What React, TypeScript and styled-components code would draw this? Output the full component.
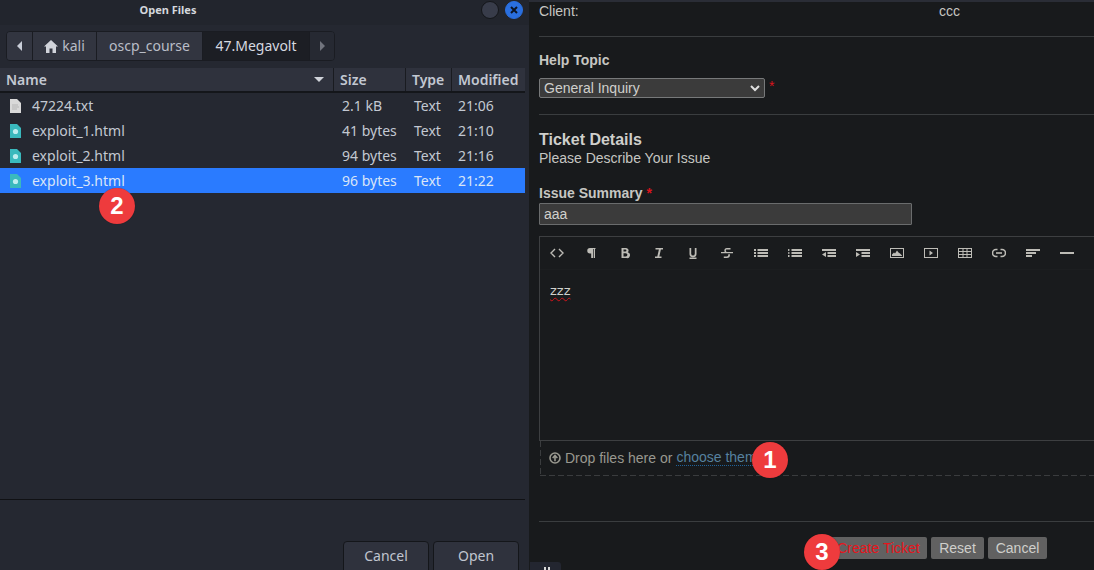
import React from "react";
import styled, { createGlobalStyle } from "styled-components";

const Global = createGlobalStyle`
  html, body { margin: 0; padding: 0; width: 1094px; height: 570px; overflow: hidden; background: #181a1c; }
  #root { width: 1094px; height: 570px; }
`;

const Page = styled.div`
  position: relative;
  display: flex;
  width: 1094px;
  height: 570px;
  overflow: hidden;
  background: #181a1c;
`;

/* ---------- file dialog ---------- */
const Dialog = styled.div`
  width: 529px;
  height: 570px;
  flex: none;
  display: flex;
  flex-direction: column;
  background: #252831;
  font-family: "Noto Sans", sans-serif;
  font-size: 14px;
  color: #c9ced8;
`;
const TitleBar = styled.div`
  height: 25px;
  flex: none;
  display: flex;
  align-items: center;
  background: #22252d;
  position: relative;
`;
const Title = styled.div`
  width: 336px;
  text-align: center;
  font-size: 11px;
  font-weight: 700;
  color: #d4d7dd;
  line-height: 20px;
  margin-top: -5px;
`;
const WinButtons = styled.div`
  position: absolute;
  left: 481px;
  top: 1px;
  display: flex;
  gap: 6px;
`;
const WinDot = styled.div<{ $blue?: boolean }>`
  width: 18px;
  height: 18px;
  box-sizing: border-box;
  border-radius: 50%;
  background: ${(p) => (p.$blue ? "#2a6fdf" : "#383c4a")};
  border: 1px solid ${(p) => (p.$blue ? "#2a6fdf" : "#14161a")};
  display: flex;
  align-items: center;
  justify-content: center;
`;
const PathArea = styled.div`
  height: 43px;
  flex: none;
  box-sizing: border-box;
  padding: 6px 0 0 6px;
  background: #252831;
`;
const PathBar = styled.div`
  width: 329px;
  height: 30px;
  box-sizing: border-box;
  border: 1px solid #1a1c22;
  border-radius: 4px;
  display: flex;
  background: #2a2d38;
  overflow: hidden;
`;
const Crumb = styled.div<{ $w: number; $active?: boolean; $dim?: boolean }>`
  width: ${(p) => p.$w}px;
  flex: none;
  box-sizing: border-box;
  display: flex;
  align-items: center;
  justify-content: center;
  gap: 4px;
  background: ${(p) => (p.$active ? "#1c1e24" : p.$dim ? "#262932" : "#323540")};
  border-right: 1px solid #1a1c22;
  color: ${(p) => (p.$active ? "#d6d9e0" : "#b9bdc7")};
  font-size: 14px;
  line-height: 28px;
  &:last-child { border-right: none; }
`;
const Columns = styled.div`
  height: 25px;
  flex: none;
  box-sizing: border-box;
  display: flex;
  width: 525px;
  background: #2f323d;
  border-bottom: 2px solid #14161a;
  font-weight: 600;
  font-size: 14px;
  color: #c3c8d2;
`;
const Column = styled.div<{ $w: number }>`
  width: ${(p) => p.$w}px;
  flex: none;
  box-sizing: border-box;
  padding-left: 6px;
  display: flex;
  align-items: center;
  justify-content: space-between;
  border-right: 1px solid #191b20;
  line-height: 22px;
  &:last-child { border-right: none; }
`;
const SortArrow = styled.svg`
  margin-right: 9px;
`;
const List = styled.div`
  flex: 1;
  width: 525px;
  background: #252831;
  border-bottom: 1px solid #101114;
`;
const Row = styled.div<{ $sel?: boolean }>`
  height: 25px;
  display: flex;
  align-items: center;
  background: ${(p) => (p.$sel ? "#2a7bff" : "transparent")};
  color: ${(p) => (p.$sel ? "#d9e5f8" : "#c3c8d2")};
`;
const NameCell = styled.div`
  width: 342px;
  flex: none;
  display: flex;
  align-items: center;
  gap: 11px;
  padding-left: 10px;
  box-sizing: border-box;
`;
const SizeCell = styled.div`
  width: 72px;
  flex: none;
`;
const TypeCell = styled.div`
  width: 44px;
  flex: none;
`;
const Footer = styled.div`
  height: 70px;
  flex: none;
  box-sizing: border-box;
  padding: 41px 10px 0 0;
  display: flex;
  justify-content: flex-end;
  gap: 4px;
`;
const DlgButton = styled.div`
  width: 86px;
  height: 40px;
  box-sizing: border-box;
  border: 1px solid #14161a;
  border-radius: 4px;
  background: #2f323d;
  color: #c0c5cf;
  text-align: center;
  line-height: 27px;
  font-size: 14px;
`;

/* ---------- ticket form ---------- */
const Main = styled.div`
  flex: 1;
  min-width: 0;
  box-sizing: border-box;
  padding-left: 10px;
  border-top: 2px solid #2a2d36;
  font-family: "Liberation Sans", Arial, sans-serif;
  font-size: 14px;
  color: #c6c6c2;
  position: relative;
`;
const ClientRow = styled.div`
  height: 35px;
  box-sizing: border-box;
  display: flex;
  line-height: 18px;
  border-bottom: 1px solid #3a3d3f;
`;
const ClientLabel = styled.div`
  width: 400px;
`;
const Section = styled.div<{ $h: number }>`
  height: ${(p) => p.$h}px;
  box-sizing: border-box;
  border-bottom: 1px solid #3a3d3f;
  padding-top: 14px;
`;
const Strong = styled.div`
  font-weight: 700;
  line-height: 18px;
`;
const SelectRow = styled.div`
  display: flex;
  align-items: flex-start;
  margin-top: 9px;
  gap: 4px;
`;
const FakeSelect = styled.div`
  width: 226px;
  height: 20px;
  box-sizing: border-box;
  border: 1px solid #77797a;
  border-radius: 2px;
  background: #3b3b3b;
  display: flex;
  align-items: center;
  justify-content: space-between;
  padding: 0 4px;
  color: #d0d0cc;
  line-height: 18px;
`;
const Req = styled.span`
  color: #d8141c;
`;
const H3 = styled.div`
  font-weight: 700;
  font-size: 16px;
  line-height: 18px;
  margin-top: 16px;
  color: #cfcfcb;
`;
const Desc = styled.div`
  line-height: 18px;
`;
const IssueLabel = styled.div`
  font-weight: 700;
  line-height: 18px;
  margin-top: 17px;
`;
const SummaryInput = styled.div`
  width: 373px;
  height: 22px;
  box-sizing: border-box;
  border: 1px solid #6a6c6d;
  border-radius: 1px;
  background: #3b3b3b;
  padding-left: 4px;
  line-height: 20px;
  color: #d0d0cc;
  margin-top: 1px;
`;
const Editor = styled.div`
  margin-top: 11px;
  height: 205px;
  box-sizing: border-box;
  border-top: 1px solid #3d3f41;
  border-left: 1px solid #3d3f41;
  border-bottom: 1px solid #3d3f41;
  background: #191b1d;
`;
const Toolbar = styled.div`
  height: 32px;
  display: flex;
  align-items: center;
  padding-left: 10px;
  gap: 20px;
  color: #bdbcb6;
  border-bottom: 1px solid #1c1e20;
`;
const ToolIcon = styled.svg`
  width: 14px;
  height: 14px;
  flex: none;
  fill: currentColor;
`;
const EditorText = styled.div`
  padding: 13px 0 0 10px;
  font-family: "DejaVu Sans", sans-serif;
  font-size: 13px;
  line-height: 16px;
  color: #d0d0cc;
  span { text-decoration: underline wavy #d0141a 1px; text-underline-offset: 2px; }
`;
const DropZone = styled.div`
  margin-left: 1px;
  height: 35px;
  box-sizing: border-box;
  background-image:
    repeating-linear-gradient(to right, #3a3c3e 0 6px, transparent 6px 9px),
    repeating-linear-gradient(to bottom, #3a3c3e 0 6px, transparent 6px 9px);
  background-size: 100% 1px, 1px 100%;
  background-position: left bottom, left top;
  background-repeat: no-repeat;
  padding: 0 0 1px 9px;
  display: flex;
  align-items: center;
  gap: 4px;
  color: #99988f;
`;
const ChooseLink = styled.span`
  color: #56819f;
  border-bottom: 1px dotted #1f6299;
  line-height: 15px;
`;
const FormLine = styled.div`
  height: 1px;
  background: #3a3d3f;
  margin-top: 45px;
`;
const Actions = styled.div`
  display: flex;
  gap: 4px;
  padding: 15px 0 0 291px;
`;
const ActBtn = styled.div<{ $w: number; $red?: boolean }>`
  width: ${(p) => p.$w}px;
  height: 22px;
  box-sizing: border-box;
  border-radius: 2px;
  background: #616161;
  color: ${(p) => (p.$red ? "#e8141c" : "#cfcfcb")};
  text-align: center;
  line-height: 22px;
`;
const Tab = styled.div`
  position: absolute;
  left: 1px;
  top: 560px;
  width: 31px;
  height: 8px;
  box-sizing: border-box;
  padding-left: 3px;
  background: #232630;
  border-radius: 0 3px 0 0;
  display: flex;
  justify-content: center;
  align-items: flex-end;
  gap: 2px;
`;
const TabMark = styled.div`
  width: 2px;
  height: 3px;
  background: #d8d8d8;
`;
const Badge = styled.div<{ $x: number; $y: number }>`
  position: absolute;
  left: ${(p) => p.$x}px;
  top: ${(p) => p.$y}px;
  width: 36px;
  height: 36px;
  border-radius: 50%;
  background: #ee3b3d;
  color: #fff;
  font-family: "Liberation Sans", Arial, sans-serif;
  font-weight: 700;
  font-size: 24px;
  line-height: 36px;
  text-align: center;
  box-shadow: 0 0 1px rgba(0,0,0,.4);
`;

/* ---------- icons ---------- */
const FileIcon = ({ html }: { html?: boolean }) =>
  html ? (
    <svg width="11" height="14" viewBox="0 0 11 14">
      <path d="M0 0h7l4 4v10H0z" fill="#3ab9bd" />
      <circle cx="5.5" cy="7.5" r="2.6" fill="#bfeef0" />
    </svg>
  ) : (
    <svg width="11" height="14" viewBox="0 0 11 14">
      <path d="M0 0h7l4 4v10H0z" fill="#d9d9d9" />
      <path d="M2 6h6M2 8h7M2 10h5" stroke="#b5b5b5" strokeWidth="1" />
    </svg>
  );

const strokeProps = { fill: "none", stroke: "currentColor" };

const tools: React.ReactNode[] = [
  <path key="a" {...strokeProps} strokeWidth="1.4" d="M5 3L1 7l4 4M9 3l4 4-4 4" />,
  <path key="b" d="M6 2h5.500v1H11v9H9.700V3H9v9H7.200V7.500H6a2.750 2.750 0 0 1 0-5.500z" />,
  <path key="c" fillRule="evenodd" d="M3.500 2h4.500a2.500 2.500 0 0 1 1.800 4.300A2.700 2.700 0 0 1 8.300 12H3.500zM5.500 3.600v2h1.900a1 1 0 0 0 0-2zM5.500 7.200v3.200h2.300a1.600 1.600 0 0 0 0-3.200z" />,
  <path key="d" d="M3.500 2h7.500v1.500H8.900L7.300 10.500h2.200V12H3v-1.500h2.300L6.900 3.500H3.500z" />,
  <path key="e" d="M3.500 2h1.700v5.800a1.800 1.800 0 0 0 3.600 0V2h1.700v5.800a3.500 3.500 0 0 1-7 0zM3.500 11.500h7V13h-7z" />,
  <path key="f" d="M10.500 2v1.600H6.800c-1.300 0-1.300 2 0 2.400H13v1.200H1V6h3.700C3.800 4 4.800 2 6.800 2zM8.200 8.200h1.700c.4 2.100-.7 3.800-3 3.800H3.800v-1.500h3.100c1 0 1.600-1.200 1.300-2.300z" />,
  <path key="g" d="M0 3h2v2H0zM0 6h2v2H0zM0 9h2v2H0zM3.500 3H14v2H3.500zM3.500 6H14v2H3.500zM3.500 9H14v2H3.500z" />,
  <path key="h" d="M0 3h1.500v.7H.7v.6h.8V5H0zM0 6.200h1.500v1.600H0zM0 9h1.500v2H0zM3.500 3H14v2H3.500zM3.500 6H14v2H3.500zM3.500 9H14v2H3.500z" />,
  <path key="i" d="M0 3h14v2H0zM5.500 6H14v2H5.500zM5.500 9H14v2H5.500zM0 8.500L4 6v5z" />,
  <path key="j" d="M0 3h14v2H0zM5.500 6H14v2H5.500zM5.500 9H14v2H5.500zM4 8.500L0 6v5z" />,
  <path key="k" fillRule="evenodd" d="M0 2h14v10H0zM1 3v8h12V3zM2 10V8.500l2-2 1 1L7 4.500l1.500 2 1.500 1 2 2V10z" />,
  <path key="l" fillRule="evenodd" d="M0 2h14v10H0zM1 3v8h12V3zM5.500 4.500l3.500 2.500-3.500 2.500z" />,
  <path key="m" fillRule="evenodd" d="M0 2h14v10H0zM1 3v2h3.500V3zM5.500 3v2h3V3zM9.500 3v2H13V3zM1 6v2h3.500V6zM5.500 6v2h3V6zM9.500 6v2H13V6zM1 9v2h3.500V9zM5.500 9v2h3V9zM9.500 9v2H13V9z" />,
  <g key="n" {...strokeProps} strokeWidth="1.600">
    <path d="M5.500 3.500H4a3.500 3.500 0 0 0 0 7h1.500M8.500 3.500H10a3.500 3.500 0 0 1 0 7H8.500" />
    <path d="M4 7h6" />
  </g>,
  <path key="o" d="M0 3h14v2H0zM0 6h10v2H0zM0 9h6v2H0z" />,
  <path key="p" d="M0 6h14v2H0z" />,
];

const files = [
  { n: "47224.txt", s: "2.1 kB", m: "21:06" },
  { n: "exploit_1.html", s: "41 bytes", m: "21:10", h: true },
  { n: "exploit_2.html", s: "94 bytes", m: "21:16", h: true },
  { n: "exploit_3.html", s: "96 bytes", m: "21:22", h: true, sel: true },
];

export default function App() {
  return (
    <Page>
      <Global />
      <Dialog>
        <TitleBar>
          <Title>Open Files</Title>
          <WinButtons>
            <WinDot />
            <WinDot $blue>
              <svg width="8" height="8" viewBox="0 0 8 8">
                <path d="M1 1l6 6M7 1L1 7" stroke="#0c1424" strokeWidth="2" />
              </svg>
            </WinDot>
          </WinButtons>
        </TitleBar>
        <PathArea>
          <PathBar>
            <Crumb $w={26}>
              <svg width="6" height="10" viewBox="0 0 6 10"><path d="M5 0v10L0 5z" fill="#c9ced8" /></svg>
            </Crumb>
            <Crumb $w={64}>
              <svg width="14" height="13" viewBox="0 0 14 13">
                <path d="M7 0L0 6.500h2V13h3.500V8.500h3V13H12V6.500h2z" fill="#d0d3da" />
              </svg>
              kali
            </Crumb>
            <Crumb $w={106}>oscp_course</Crumb>
            <Crumb $w={107} $active>47.Megavolt</Crumb>
            <Crumb $w={24} $dim>
              <svg width="6" height="10" viewBox="0 0 6 10"><path d="M1 0v10l5-5z" fill="#71747d" /></svg>
            </Crumb>
          </PathBar>
        </PathArea>
        <Columns>
          <Column $w={334}>
            Name
            <SortArrow width="10" height="6" viewBox="0 0 10 6"><path d="M0 0h10L5 5z" fill="#d0d3da" /></SortArrow>
          </Column>
          <Column $w={72}>Size</Column>
          <Column $w={46}>Type</Column>
          <Column $w={73}>Modified</Column>
        </Columns>
        <List>
          {files.map((f) => (
            <Row key={f.n} $sel={f.sel}>
              <NameCell>
                <FileIcon html={f.h} />
                {f.n}
              </NameCell>
              <SizeCell>{f.s}</SizeCell>
              <TypeCell>Text</TypeCell>
              <div>{f.m}</div>
            </Row>
          ))}
        </List>
        <Footer>
          <DlgButton>Cancel</DlgButton>
          <DlgButton>Open</DlgButton>
        </Footer>
      </Dialog>
      <Main>
        <ClientRow>
          <ClientLabel>Client:</ClientLabel>
          <div>ccc</div>
        </ClientRow>
        <Section $h={78}>
          <Strong>Help Topic</Strong>
          <SelectRow>
            <FakeSelect>
              General Inquiry
              <svg width="10" height="7" viewBox="0 0 10 7"><path d="M1 1l4 4 4-4" fill="none" stroke="#e0e0e0" strokeWidth="2" /></svg>
            </FakeSelect>
            <Req>*</Req>
          </SelectRow>
        </Section>
        <H3>Ticket Details</H3>
        <Desc>Please Describe Your Issue</Desc>
        <IssueLabel>Issue Summary <Req>*</Req></IssueLabel>
        <SummaryInput>aaa</SummaryInput>
        <Editor>
          <Toolbar>
            {tools.map((t, i) => (
              <ToolIcon key={i} viewBox="0 0 14 14">{t}</ToolIcon>
            ))}
          </Toolbar>
          <EditorText><span>zzz</span></EditorText>
        </Editor>
        <DropZone>
          <svg width="12" height="12" viewBox="0 0 12 12">
            <circle cx="6" cy="6" r="5" fill="none" stroke="#99988f" strokeWidth="1.600" />
            <path d="M6 9.200V4M3.700 6L6 3.500 8.300 6" fill="none" stroke="#99988f" strokeWidth="1.600" />
          </svg>
          Drop files here or <ChooseLink>choose them</ChooseLink>
        </DropZone>
        <FormLine />
        <Actions>
          <ActBtn $w={97} $red>Create Ticket</ActBtn>
          <ActBtn $w={53}>Reset</ActBtn>
          <ActBtn $w={59}>Cancel</ActBtn>
        </Actions>
        <Tab><TabMark /><TabMark /></Tab>
      </Main>
      <Badge $x={99} $y={188}>2</Badge>
      <Badge $x={752} $y={442}>1</Badge>
      <Badge $x={804} $y={534}>3</Badge>
    </Page>
  );
}
